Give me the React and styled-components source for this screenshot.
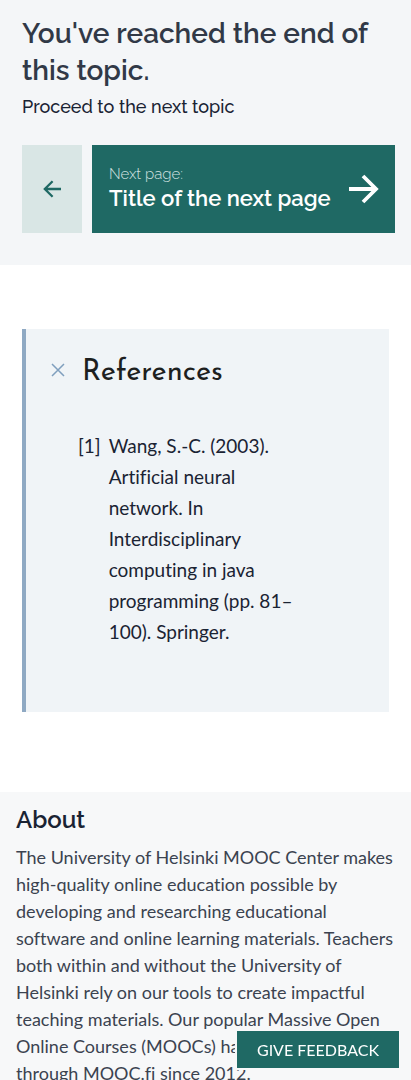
import React from "react";
import styled, { createGlobalStyle } from "styled-components";

const GlobalStyle = createGlobalStyle`
  *, *::before, *::after { box-sizing: border-box; }
  body {
    margin: 0;
    background: #fff;
    color: #1a2333;
    font-family: Lato, "Open Sans", sans-serif;
    font-variant-ligatures: none;
  }
  h1, h2, p, ol { margin: 0; padding: 0; }
`;

const display = `Raleway, Lato, "Open Sans", sans-serif`;

const EndOfTopic = styled.section`
  padding: 15px 16px 32px 22px;
  background: #f4f6f8;
`;

const EndTitle = styled.h1`
  color: #313947;
  font: 600 28px/37px ${display};
`;

const EndText = styled.p`
  margin-top: 4px;
  font: 500 18px/28px ${display};
`;

const PageLinks = styled.nav`
  display: flex;
  gap: 10px;
  margin-top: 24px;
`;

const PageLink = styled.a`
  display: flex;
  align-items: center;
  min-height: 88px;
  text-decoration: none;
`;

const PreviousLink = styled(PageLink)`
  flex: 0 0 60px;
  justify-content: center;
  background: #d9e6e5;
  color: #1f6964;
`;

const NextLink = styled(PageLink)`
  flex: 1;
  justify-content: space-between;
  padding: 0 16px 0 17px;
  background: #1f6964;
  color: #fff;
`;

const NextLabel = styled.span`
  display: block;
  color: #d2e1e0;
  font: 300 15px/20px ${display};
`;

const NextTitle = styled.span`
  display: block;
  padding-bottom: 2px;
  font: 600 22px/28px ${display};
`;

const References = styled.section`
  margin: 64px 22px 80px;
  padding: 22px 24px 65px;
  border-left: 4px solid #8fa9c3;
  background: #f0f4f7;
`;

const ReferencesHeading = styled.h2`
  display: flex;
`;

const ReferencesToggle = styled.button`
  display: flex;
  align-items: center;
  gap: 15px;
  padding: 0;
  border: 0;
  background: none;
  color: #1d1f1f;
  font: 400 29px/32px "Josefin Sans", Lato, sans-serif;
  cursor: pointer;
`;

const ToggleLabel = styled.span`
  padding-top: 6px;
`;

const ReferenceList = styled.ol`
  padding: 41px 60px 0 28px;
  list-style: none;
`;

const ReferenceItem = styled.li`
  display: flex;
  gap: 8px;
  font-size: 19px;
  line-height: 31px;
`;

const Footer = styled.footer`
  padding: 12px 16px;
  background: #f7f8f9;
`;

const FooterTitle = styled.h2`
  font: 600 24px/32px ${display};
`;

const FooterText = styled.p`
  margin-top: 8px;
  color: #3b4350;
  font-size: 18px;
  line-height: 27px;
`;

const FeedbackButton = styled.button`
  position: fixed;
  right: 12px;
  bottom: 12px;
  padding: 0 20px;
  border: 0;
  background: #1f6964;
  box-shadow: 0 0 0 2px #f7f8f9;
  color: #fff;
  font: 400 16px/37px Lato, sans-serif;
  cursor: pointer;
`;

function Arrow({ size, back }) {
  return (
    <svg width={size} height={size} viewBox="0 0 30 30" aria-hidden="true">
      <path
        d={
          back
            ? "M30 15H4M16 2L3 15L16 28"
            : "M0 15H26M14 2L27 15L14 28"
        }
        fill="none"
        stroke="currentColor"
        strokeWidth="3.8"
      />
    </svg>
  );
}

function Cross() {
  return (
    <svg width="17" height="14" viewBox="0 0 17 14" aria-hidden="true">
      <path d="M2 1L14 13M14 1L2 13" fill="none" stroke="#7f9fbe" strokeWidth="1.5" />
    </svg>
  );
}

export default function App() {
  return (
    <>
      <GlobalStyle />
      <main>
        <EndOfTopic>
          <EndTitle>You've reached the end of this topic.</EndTitle>
          <EndText>Proceed to the next topic</EndText>
          <PageLinks aria-label="Topic pages">
            <PreviousLink href="#previous" aria-label="Previous page">
              <Arrow size={18} back />
            </PreviousLink>
            <NextLink href="#next">
              <span>
                <NextLabel>Next page:</NextLabel>
                <NextTitle>Title of the next page</NextTitle>
              </span>
              <Arrow size={30} />
            </NextLink>
          </PageLinks>
        </EndOfTopic>
        <References>
          <ReferencesHeading>
            <ReferencesToggle type="button" aria-expanded="true">
              <Cross />
              <ToggleLabel>References</ToggleLabel>
            </ReferencesToggle>
          </ReferencesHeading>
          <ReferenceList>
            <ReferenceItem>
              <span>[1]</span>
              <span>
                Wang, S.-C. (2003). Artificial neural network. In Interdisciplinary
                computing in java programming (pp. 81–100). Springer.
              </span>
            </ReferenceItem>
          </ReferenceList>
        </References>
      </main>
      <Footer>
        <FooterTitle>About</FooterTitle>
        <FooterText>
          The University of Helsinki MOOC Center makes high-quality online education
          possible by developing and researching educational software and online
          learning materials. Teachers both within and without the University of
          Helsinki rely on our tools to create impactful teaching materials. Our
          popular Massive Open Online Courses (MOOCs) have been available through
          MOOC.fi since 2012.
        </FooterText>
      </Footer>
      <FeedbackButton type="button">GIVE FEEDBACK</FeedbackButton>
    </>
  );
}
